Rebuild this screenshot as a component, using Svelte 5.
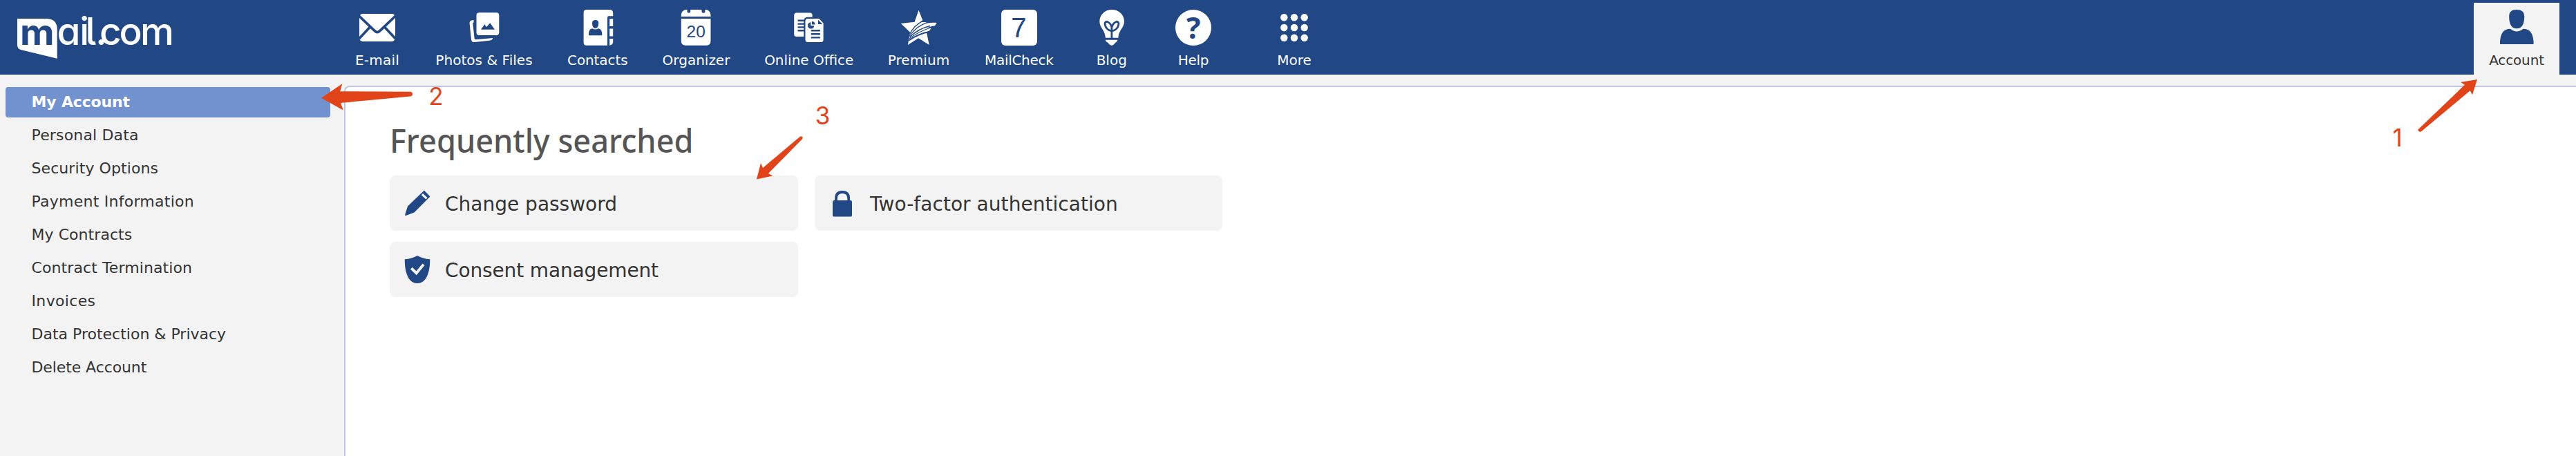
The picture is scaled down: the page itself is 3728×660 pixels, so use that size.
<script>
  const apps = [
    { id: 'email', label: 'E-mail', width: 112, track: 0.25 },
    { id: 'photos', label: 'Photos & Files', width: 197, track: 0.05 },
    { id: 'contacts', label: 'Contacts', width: 131.5, track: -0.1 },
    { id: 'organizer', label: 'Organizer', width: 154, track: 0 },
    { id: 'office', label: 'Online Office', width: 172.5, track: 0 },
    { id: 'premium', label: 'Premium', width: 145, track: 0.1 },
    { id: 'mailcheck', label: 'MailCheck', width: 145.5, track: -0.3 },
    { id: 'blog', label: 'Blog', width: 122.5, track: 0 },
    { id: 'help', label: 'Help', width: 114, track: -0.3 },
    { id: 'more', label: 'More', width: 178, track: 0 }
  ];
  const menu = [
    { label: 'My Account', track: -0.15 },
    { label: 'Personal Data', track: 0.16 },
    { label: 'Security Options', track: 0.08 },
    { label: 'Payment Information', track: 0.25 },
    { label: 'My Contracts', track: 0.06 },
    { label: 'Contract Termination', track: 0.1 },
    { label: 'Invoices', track: 0.35 },
    { label: 'Data Protection & Privacy', track: 0 },
    { label: 'Delete Account', track: -0.1 }
  ];
  const cards = [
    { id: 'pencil', label: 'Change password', track: 0 },
    { id: 'lock', label: 'Two-factor authentication', track: 0.05 },
    { id: 'shield', label: 'Consent management', track: -0.14 }
  ];
  const dots = [11.3, 26, 40.7];
</script>

<div class="page">
  <header>
    <div class="logo">
      <svg width="256" height="108" viewBox="0 0 256 108" fill="#fff">
        <path d="M25 27H68Q82.7 28 82.7 42V84.8L30 72Q25 70.3 25 65Z" />
        <text class="bubble" x="29" y="65" textLength="49.6" lengthAdjust="spacingAndGlyphs">m</text>
        <text class="word" x="82.6 115.3 123.6 138.3 144 172.4 203" y="65">ail.com</text>
      </svg>
    </div>
    <nav>
      {#each apps as app}
        <a class="app" style="width:{app.width}px;letter-spacing:{app.track}px">
          <svg width="52" height="52" viewBox="0 0 52 52" fill="#fff">
            {#if app.id === 'email'}
              <rect y="6" width="52" height="40" rx="5" />
              <g fill="none" stroke="#214785" stroke-width="3.6">
                <path d="M-2 7.6L22.5 30.9Q26 34.2 29.5 30.9L54 7.6" />
                <path d="M16 24.5L-1 42.8M36 24.5L53 42.8" />
              </g>
            {:else if app.id === 'photos'}
              <rect x="14.5" y="4.2" width="32.8" height="32.8" rx="4" />
              <path fill="#214785" d="M21 28.8L26.3 21.2L29.2 25L34.2 19.2L41 28.8Z" />
              <path d="M10.6 15L7.5 15.5Q4.3 16.3 4.6 20L7 43.5Q7.6 47.4 11.5 47L33 44.7Q37.5 44 38.5 41L13.5 43.2Q11.9 43.2 11.6 41.8L9.3 20Q9.3 18.8 10.6 18.5Z" />
            {:else if app.id === 'contacts'}
              <path d="M9.6 0H43Q48.2 0 48.2 5V9.3H42Q40 9.3 40 11.5V51.8H9.6Q5.6 51.8 5.6 47.5V4.3Q5.6 0 9.6 0Z" />
              <path d="M43.2 13.3H48.2V24H43.2ZM43.2 27.6H48.2V38.6H43.2ZM43.2 42H48.2V47Q48.2 50.5 43.2 51.8Z" />
              <g fill="#214785">
                <path d="M18 19.5Q18 15 22.6 15T27.3 19.5Q27 27 22.6 27T18 19.5Z" />
                <path d="M13 37.2Q12.4 27.6 18.5 27.2Q22.6 29.6 26.8 27.2Q32.8 27.6 32.3 37.2Z" />
              </g>
            {:else if app.id === 'organizer'}
              <path d="M10 0H12.5V3Q12.5 4.8 14.8 4.8T17.2 3V0H33.5V3Q33.5 4.8 36 4.8T38.4 3V0H40.5Q46.5 2 46.5 8V10H3.8V8Q3.8 2 10 0Z" />
              <path d="M3.8 13H46.5V45Q46.5 51.8 40.5 51.8H9.8Q3.8 51.8 3.8 45Z" />
              <text class="day" x="25.2" y="39.6" text-anchor="middle">20</text>
            {:else if app.id === 'office'}
              <rect x="4.2" y="4.5" width="26.4" height="34.4" rx="3.5" />
              <path stroke="#214785" stroke-width="2.4" stroke-linecap="round" d="M10.5 15.7H22M10.5 20.6H22M10.5 25.4H22M10.5 30.3H22" />
              <path stroke="#214785" stroke-width="4.4" paint-order="stroke" d="M24 13H40.3L46.6 19.5V43.5Q46.6 47 43 47H24Q20.5 47 20.5 43.5V16.5Q20.5 13 24 13Z" />
              <g fill="#214785">
                <path d="M39 14.8V20.9H45.2Z" />
                <path d="M28.3 18.2V23.2H33.3A4.6 4.6 0 1 1 28.3 18.2Z" />
                <path d="M30 17A4.6 4.6 0 0 1 34.5 21.5H30Z" />
              </g>
              <path stroke="#214785" stroke-width="2.4" stroke-linecap="round" d="M29.8 30.2H41M29.8 35.3H41M29.8 40.4H41" />
            {:else if app.id === 'premium'}
              <path d="M25.5 .8L31.3 15.3Q29 17 28 18L37.3 18Q36 19 35 20Q43 18.6 51.7 18.9L49 23.3Q43 24 38.5 26L43.7 26.8L40.5 31.2L37 32.7L40.7 50.9L25.2 41.3L9.8 50.9L13.3 33L-.2 20L19.6 17.7Z" />
              <g fill="none" stroke="#214785" stroke-width="1.3">
                <path d="M12.8 35Q19 22.5 31.5 16.4" />
                <path d="M12.5 38Q22 24 37.5 18.6" />
                <path d="M12.5 39.7Q25 27.5 42 23.5" stroke-width="1.6" />
                <path d="M12 42Q24 32.5 42.5 26" />
                <path d="M11.5 44.5Q24 35.5 42 31.6" stroke-width="2" />
              </g>
            {:else if app.id === 'mailcheck'}
              <rect width="52" height="52" rx="6" />
              <text class="seven" x="25.4" y="39.7" text-anchor="middle">7</text>
            {:else if app.id === 'blog'}
              <path d="M26 0C36.5 0 44 7.5 44 17.2C44 26 36 29 35.3 40.8H16.9C16.2 29 8.3 26 8.3 17.2C8.3 7.5 15.5 0 26 0Z" />
              <path d="M16.7 43.7H34.5Q34 46.5 31.5 47.5L28.5 50.7Q26 52.8 23.2 50.7L20 47.5Q17 46.5 16.7 43.7Z" />
              <g fill="none" stroke="#214785" stroke-width="2.8">
                <path d="M25.9 42V30.8Q17 29.2 16 20.6Q16 17.2 19.5 17.5Q24.5 19.5 25.9 25.5V31" />
                <path d="M25.9 30.8Q35 29.2 36 20.6Q36 17.2 32.5 17.5Q27.5 19.5 25.9 25.5" />
              </g>
            {:else if app.id === 'help'}
              <circle cx="26" cy="26" r="26" />
              <text class="question" x="26.3" y="42.4" text-anchor="middle">?</text>
            {:else}
              {#each dots as y}
                {#each dots as x}
                  <circle cx={x} cy={y} r="5.2" />
                {/each}
              {/each}
            {/if}
          </svg>
          <span>{app.label}</span>
        </a>
      {/each}
    </nav>
    <a class="app account">
      <svg width="52" height="52" viewBox="0 0 52 52" fill="#214785">
        <path d="M15.2 9.5Q15.2 0 26.2 0T37.3 9.5Q37.3 27.3 26.2 27.3T15.2 9.5Z" />
        <path d="M2 50Q1.5 27.8 17 27.8Q26.2 35.4 35.5 27.8Q51 27.8 50.6 50Z" />
      </svg>
      <span>Account</span>
    </a>
  </header>

  <div class="body">
    <aside>
      {#each menu as item, i}
        <a class="entry" class:active={i === 0} style="letter-spacing:{item.track}px">{item.label}</a>
      {/each}
    </aside>
    <main>
      <h1>Frequently searched</h1>
      <div class="cards">
        {#each cards as card}
          <a class="card" style="letter-spacing:{card.track}px">
            <svg width="40" height="40" viewBox="0 0 40 40" fill="#214785">
              {#if card.id === 'pencil'}
                <path d="M29.5 2Q30 1.8 30.7 2.6L37.8 9.8Q38.2 10.5 37.7 11.2L15.5 33.5L3.5 38Q1.8 38.4 2.2 36.5L6 24.5Z" />
                <path fill="#f3f3f3" d="M25.8 8.2L28 6L34.6 12.3L32.4 14.5Z" />
              {:else if card.id === 'lock'}
                <rect x="6" y="16" width="28" height="23.6" rx="2.2" />
                <path fill="none" stroke="#214785" stroke-width="3.8" d="M11 17.5V13Q11 4 20 4T29.2 13V17.5" />
              {:else}
                <path d="M20 0Q28 4.6 38.2 5.3C38.5 22 34 40 20 40S1.5 22 1.8 5.3Q12 4.6 20 0Z" />
                <path fill="none" stroke="#f3f3f3" stroke-width="4" d="M11.3 18.3L18.6 25.3L29 12.8" />
              {/if}
            </svg>
            <span>{card.label}</span>
          </a>
        {/each}
      </div>
    </main>
  </div>

  <svg class="notes" width="3728" height="660" viewBox="0 0 3728 660" fill="#e2441a">
    <path d="M465 141.7L495.3 121.3L492.2 132.2L593 132.8Q597 133.2 597 136Q597 139 594 139.5L493 149L496.7 159.5Z" />
    <path d="M3585 115L3578 137.3L3574.7 131.3L3503.5 190.7Q3501.5 191.3 3500 189.6Q3498.9 188 3500 187L3567 122.8L3561.2 119Z" />
    <path d="M1095 259.5L1101 236L1104 243L1157.5 198Q1159.5 196.6 1161 198Q1162.3 199.5 1161 201.2L1112 251L1118.3 254.5Z" />
    <text x="3462.5" y="212">1</text>
    <text x="620.3" y="152">2</text>
    <text x="1179.8" y="180.2">3</text>
  </svg>
</div>

<style>
  :global(body) {
    margin: 0;
    background: #f3f3f3;
  }
  .page {
    position: relative;
    width: 3728px;
    height: 660px;
    overflow: hidden;
    display: flex;
    flex-direction: column;
    background: #f3f3f3;
    color: #333;
    font-family: Verdana, 'DejaVu Sans', sans-serif;
  }
  header {
    display: flex;
    height: 108px;
    flex: none;
    background: #214785;
    color: #fff;
  }
  .logo {
    width: 490px;
  }
  .logo svg {
    display: block;
  }
  .word,
  .bubble {
    font-family: Inter, sans-serif;
    font-size: 55px;
    font-weight: 500;
    font-feature-settings: 'cv11', 'cv05';
  }
  .bubble {
    fill: #214785;
    font-weight: 700;
    font-size: 52px;
  }
  nav {
    display: flex;
    flex: 1;
  }
  .app {
    display: flex;
    flex-direction: column;
    align-items: center;
    gap: 9px;
    padding-top: 14px;
    font-size: 20px;
    line-height: 24px;
    white-space: nowrap;
  }
  .app svg {
    flex: none;
    overflow: visible;
  }
  .app:first-child svg {
    overflow: hidden;
  }
  .account {
    width: 124px;
    margin: 4px 24px 0 0;
    padding-top: 10px;
    background: #f3f3f3;
    color: #333;
    letter-spacing: -0.15px;
  }
  .day,
  .seven {
    fill: #214785;
    font-family: 'Liberation Sans', Arial, sans-serif;
    font-size: 24.5px;
    letter-spacing: 0;
  }
  .seven {
    font-size: 40px;
  }
  .question {
    fill: #214785;
    font-family: 'Open Sans', sans-serif;
    font-size: 43px;
    font-weight: 700;
    letter-spacing: 0;
  }
  .body {
    display: flex;
    flex: 1;
  }
  aside {
    width: 470px;
    padding: 18px 20px 0 8px;
    display: flex;
    flex-direction: column;
    gap: 4px;
  }
  .entry {
    height: 44px;
    padding-left: 37.5px;
    line-height: 44px;
    font-size: 22px;
    white-space: nowrap;
  }
  .active {
    background: #7292cf;
    color: #fff;
    font-weight: 700;
    border-radius: 4px;
  }
  main {
    flex: 1;
    margin-top: 16px;
    padding: 45px 0 0 64px;
    border: solid #bcc8e3;
    border-width: 2px 0 0 2px;
    border-top-left-radius: 8px;
    background: #fff;
  }
  h1 {
    margin: 0 0 19px;
    font: 500 48px/64px 'Noto Sans', sans-serif;
    transform: scaleX(0.94);
    transform-origin: left;
    width: max-content;
    color: #555;
  }
  .cards {
    display: grid;
    grid-template-columns: 591px 590px;
    column-gap: 24px;
    row-gap: 16px;
  }
  .card {
    display: flex;
    align-items: center;
    gap: 20px;
    height: 80px;
    padding-left: 20px;
    box-sizing: border-box;
    border-radius: 8px;
    background: #f3f3f3;
    font-size: 28px;
    white-space: nowrap;
  }
  .card span {
    padding-top: 2px;
  }
  .notes {
    position: absolute;
    left: 0;
    top: 0;
    font: 400 35px Inter, sans-serif;
    pointer-events: none;
  }
</style>
